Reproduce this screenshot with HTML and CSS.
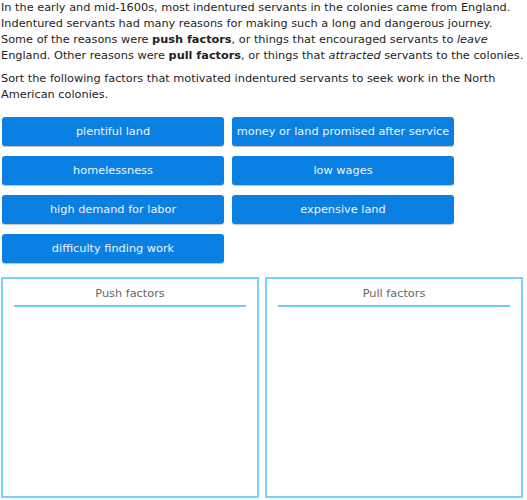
FILE: index.html
```html
<!DOCTYPE html>
<html lang="en">
<head>
    <title>Push and pull factors</title>
    <meta charset="UTF-8">
    <meta name="viewport" content="width=device-width, initial-scale=1">
    <link rel="stylesheet" href="styles.css">
</head>
<body>
    <div class="question">
        <p>In the early and mid-1600s, most indentured servants in the colonies came from England. Indentured servants had many reasons for making such a long and dangerous journey. Some of the reasons were <strong>push factors</strong>, or things that encouraged servants to <em>leave</em> England. Other reasons were <strong>pull factors</strong>, or things that <em>attracted</em> servants to the colonies.</p>
        <p>Sort the following factors that motivated indentured servants to seek work in the North American colonies.</p>

        <!-- Tiles to sort -->
        <div class="tiles">
            <div class="tile">plentiful land</div>
            <div class="tile">money or land promised after service</div>
            <div class="tile">homelessness</div>
            <div class="tile">low wages</div>
            <div class="tile">high demand for labor</div>
            <div class="tile">expensive land</div>
            <div class="tile">difficulty finding work</div>
        </div>

        <!-- Drop zones -->
        <div class="buckets">
            <div class="bucket">
                <div class="bucket-title">Push factors</div>
            </div>
            <div class="bucket">
                <div class="bucket-title">Pull factors</div>
            </div>
        </div>
    </div>
</body>
</html>
```

FILE: styles.css
```css
body { margin: 0; font-family: "DejaVu Sans", Verdana, sans-serif; font-size: 11.3px; color: #1e1e1e; background: white; }
.question { padding: 0 0 0 1px; }
p { margin: 0 0 7px; line-height: 16px; }
.tiles { display: grid; grid-template-columns: 222px 222px; column-gap: 8px; row-gap: 10px; margin: 14px 0 0 1px; }
.tile { height: 29px; line-height: 29px; background: #0b80e3; color: #eef5ff; text-align: center; border-radius: 3px; box-shadow: 0 1px 1px rgba(0,0,0,0.25); white-space: nowrap; }
.buckets { display: grid; grid-template-columns: 258px 258px; column-gap: 6px; margin-top: 14px; }
.bucket { height: 217px; border: 2px solid #78d1f6; padding: 0 10px; }
.bucket-title { color: #666; text-align: center; padding: 8px 0 5px; border-bottom: 2px solid #6ccbf2; margin: 0 1px; }
```
